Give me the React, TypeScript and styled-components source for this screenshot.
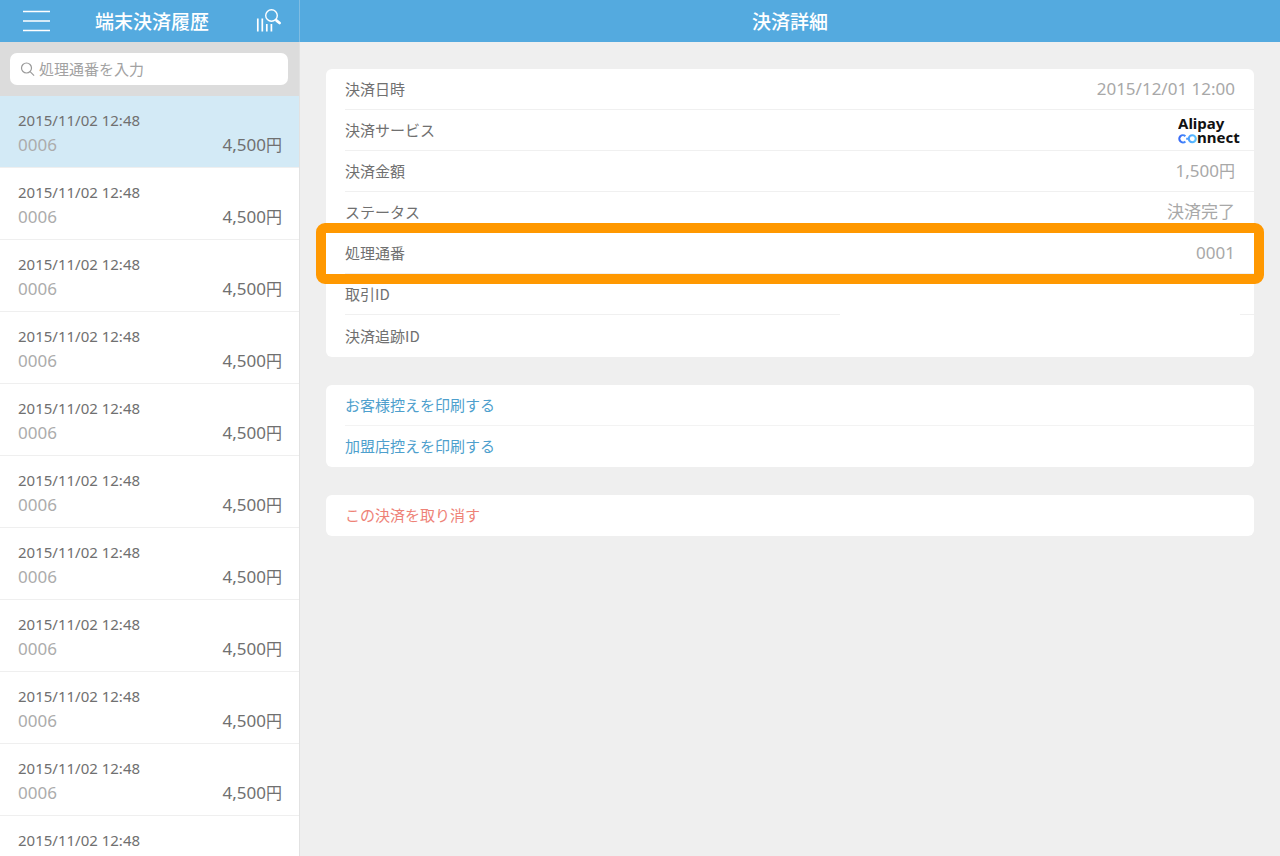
import React from "react";
import styled, { createGlobalStyle, css } from "styled-components";

const GlobalStyle = createGlobalStyle`
  *, *::before, *::after { box-sizing: border-box; }
  body {
    margin: 0;
    background: #efefef;
    color: #707070;
    font-family: "Noto Sans", "Noto Sans CJK JP", sans-serif;
    font-size: 15px;
  }
  button, input { font: inherit; color: inherit; }
  ul, dl, dd { margin: 0; padding: 0; list-style: none; }
`;

const jp = css`
  font-family: "Noto Sans CJK JP", sans-serif;
`;

const Layout = styled.div`
  display: grid;
  grid-template-columns: 300px 1fr;
  height: 100vh;
`;

const Sidebar = styled.aside`
  display: flex;
  flex-direction: column;
  min-height: 0;
  background: #fff;
  border-right: 1px solid #e2e2e2;
`;

const Bar = styled.header`
  ${jp}
  flex: none;
  display: flex;
  align-items: center;
  justify-content: center;
  height: 42px;
  background: #54aadf;
  color: #fff;
`;

const SideBar = styled(Bar)`
  display: grid;
  grid-template-columns: 1fr auto 1fr;
  margin-right: -1px;
  padding: 0 17px 0 22px;
  border-right: 1px solid #7fbce2;
`;

const Title = styled.h1`
  margin: 0;
  font-size: 19px;
  line-height: 28px;
  font-weight: 500;
`;

const IconButton = styled.button<{ $end?: boolean }>`
  display: flex;
  justify-self: ${(p) => (p.$end ? "end" : "start")};
  padding: 0;
  border: 0;
  background: none;
  cursor: pointer;
`;

const SearchArea = styled.div`
  flex: none;
  padding: 11px 11px 11px 10px;
  background: #dcdcdc;
`;

const SearchBox = styled.label`
  display: flex;
  align-items: center;
  gap: 3px;
  height: 32px;
  padding: 0 10px;
  border-radius: 7px;
  background: #fff;
`;

const SearchInput = styled.input`
  ${jp}
  flex: 1;
  min-width: 0;
  padding: 0;
  border: 0;
  outline: 0;
  background: none;
  line-height: 24px;
  &::placeholder { color: #a2a2a2; opacity: 1; }
`;

const History = styled.ul`
  flex: 1;
  min-height: 0;
  overflow-y: auto;
  scrollbar-width: none;
`;

const Entry = styled.button<{ $selected: boolean }>`
  display: flex;
  flex-direction: column;
  gap: 1px;
  width: 100%;
  padding: 12px 17px 10px 18px;
  border: 0;
  border-bottom: 1px solid #efefef;
  background: ${(p) => (p.$selected ? "#d3eaf6" : "#fff")};
  line-height: 24px;
  text-align: left;
  cursor: pointer;
`;

const EntryLine = styled.span`
  display: flex;
  justify-content: space-between;
  width: 100%;
  font-size: 17px;
`;

const Serial = styled.span`
  color: #acacac;
`;

const Yen = styled.span`
  font-size: 16px;
`;

const Detail = styled.main`
  display: flex;
  flex-direction: column;
  min-width: 0;
`;

const Cards = styled.div`
  display: flex;
  flex-direction: column;
  gap: 28px;
  padding: 27px 26px;
`;

const Card = styled.dl`
  border-radius: 6px;
  background: #fff;
`;

const Row = styled.div<{ $highlighted?: boolean }>`
  position: relative;
  padding-left: 19px;
  ${(p) =>
    p.$highlighted &&
    css`
      &::after {
        content: "";
        position: absolute;
        z-index: 1;
        inset: -10px;
        border: 10px solid #ff9800;
        border-radius: 9px;
        pointer-events: none;
      }
    `}
`;

const RowInner = styled.div<{ $divided: boolean }>`
  display: flex;
  align-items: center;
  justify-content: space-between;
  height: ${(p) => (p.$divided ? "41px" : "42px")};
  padding-right: 14px;
  border-bottom: ${(p) => (p.$divided ? "1px solid #f0f0f0" : "0")};
`;

const Label = styled.dt`
  ${jp}
  line-height: 24px;
`;

const Value = styled.dd`
  padding-right: 5px;
  color: #a8a8a8;
  font-size: 17px;
  line-height: 24px;
`;

const LogoValue = styled.dd`
  display: flex;
`;

const Blank = styled.dd`
  align-self: stretch;
  width: 400px;
  margin-bottom: -1px;
  background: #fff;
`;

const Actions = styled(Card).attrs({ as: "ul" })``;

const Action = styled.button<{ $danger?: boolean; $divided?: boolean }>`
  ${jp}
  display: block;
  width: calc(100% - 19px);
  height: 41px;
  margin-left: 19px;
  padding: 0;
  border: 0;
  border-bottom: 1px solid ${(p) => (p.$divided ? "#f3f3f3" : "transparent")};
  background: none;
  color: ${(p) => (p.$danger ? "#ee8277" : "#4e9fcd")};
  line-height: 24px;
  text-align: left;
  cursor: pointer;
`;

const MenuIcon = () => (
  <svg width="28" height="22" viewBox="0 0 28 22" stroke="#fff" strokeWidth="1.5">
    <path d="M1 1.5h27M1 11h27M1 20.5h27" />
  </svg>
);

const HistorySearchIcon = () => (
  <svg width="26" height="24" viewBox="0 0 26 24" fill="none" stroke="#fff">
    <path d="M1.8 9.5v13M6.3 9.5v13M10.8 15V22.5M15.4 15V22.5" strokeWidth="1.7" />
    <circle cx="15.5" cy="6.5" r="5.8" strokeWidth="1.4" />
    <path d="M19.6 10.6l1.3 1.2" strokeWidth="1.4" />
    <path d="M20.6 11.6l3 2.4" strokeWidth="2.8" strokeLinecap="round" />
  </svg>
);

const MagnifierIcon = () => (
  <svg width="16" height="16" viewBox="0 0 16 16" fill="none" stroke="#9a9a9a" strokeWidth="1.2">
    <circle cx="6.5" cy="7" r="5" />
    <path d="M10.1 10.6l4 4" />
  </svg>
);

const LogoText = styled.text`
  font: 700 15px "Noto Sans", sans-serif;
  fill: #111;
`;

const AlipayConnectLogo = () => (
  <svg width="62" height="32" viewBox="0 0 62 32" role="img" aria-label="Alipay connect">
    <defs>
      <linearGradient id="loop" x1="0" x2="1">
        <stop offset="0" stopColor="#3a6cf6" />
        <stop offset="0.5" stopColor="#4a9bff" />
        <stop offset="1" stopColor="#5cc3ff" />
      </linearGradient>
    </defs>
    <LogoText x="0" y="15">Alipay</LogoText>
    <path
      d="M7.4 22.2A3.6 3.6 0 1 0 7.4 27.4M8.2 24.8H10.8M14.3 21.3A3.5 3.5 0 1 1 14.3 28.3A3.5 3.5 0 1 1 14.3 21.3"
      fill="none"
      stroke="url(#loop)"
      strokeWidth="2.1"
    />
    <LogoText x="19" y="29">nnect</LogoText>
  </svg>
);

type Item = {
  label: string;
  value?: React.ReactNode;
  kind?: "logo" | "blank";
  highlighted?: boolean;
};

const items: Item[] = [
  { label: "決済日時", value: "2015/12/01 12:00" },
  { label: "決済サービス", value: <AlipayConnectLogo />, kind: "logo" },
  { label: "決済金額", value: <>1,500<Yen>円</Yen></> },
  { label: "ステータス", value: "決済完了" },
  { label: "処理通番", value: "0001", highlighted: true },
  { label: "取引ID", kind: "blank" },
  { label: "決済追跡ID" },
];

const history = Array.from({ length: 11 }, () => ({
  date: "2015/11/02 12:48",
  serial: "0006",
  amount: "4,500",
}));

function DetailRow({ item, last }: { item: Item; last: boolean }) {
  return (
    <Row $highlighted={item.highlighted}>
      <RowInner $divided={!last}>
        <Label>{item.label}</Label>
        {item.kind === "logo" && <LogoValue>{item.value}</LogoValue>}
        {item.kind === "blank" && <Blank />}
        {!item.kind && <Value>{item.value}</Value>}
      </RowInner>
    </Row>
  );
}

export default function App() {
  return (
    <>
      <GlobalStyle />
      <Layout>
        <Sidebar>
          <SideBar>
            <IconButton aria-label="メニュー"><MenuIcon /></IconButton>
            <Title>端末決済履歴</Title>
            <IconButton $end aria-label="履歴検索"><HistorySearchIcon /></IconButton>
          </SideBar>
          <SearchArea>
            <SearchBox>
              <MagnifierIcon />
              <SearchInput type="text" aria-label="処理通番" placeholder="処理通番を入力" />
            </SearchBox>
          </SearchArea>
          <History>
            {history.map((h, i) => (
              <li key={i}>
                <Entry $selected={i === 0}>
                  <span>{h.date}</span>
                  <EntryLine>
                    <Serial>{h.serial}</Serial>
                    <span>{h.amount}<Yen>円</Yen></span>
                  </EntryLine>
                </Entry>
              </li>
            ))}
          </History>
        </Sidebar>
        <Detail>
          <Bar><Title as="h2">決済詳細</Title></Bar>
          <Cards>
            <Card>
              {items.map((item, i) => (
                <DetailRow key={item.label} item={item} last={i === items.length - 1} />
              ))}
            </Card>
            <Actions>
              <li><Action $divided>お客様控えを印刷する</Action></li>
              <li><Action>加盟店控えを印刷する</Action></li>
            </Actions>
            <Actions>
              <li><Action $danger>この決済を取り消す</Action></li>
            </Actions>
          </Cards>
        </Detail>
      </Layout>
    </>
  );
}
